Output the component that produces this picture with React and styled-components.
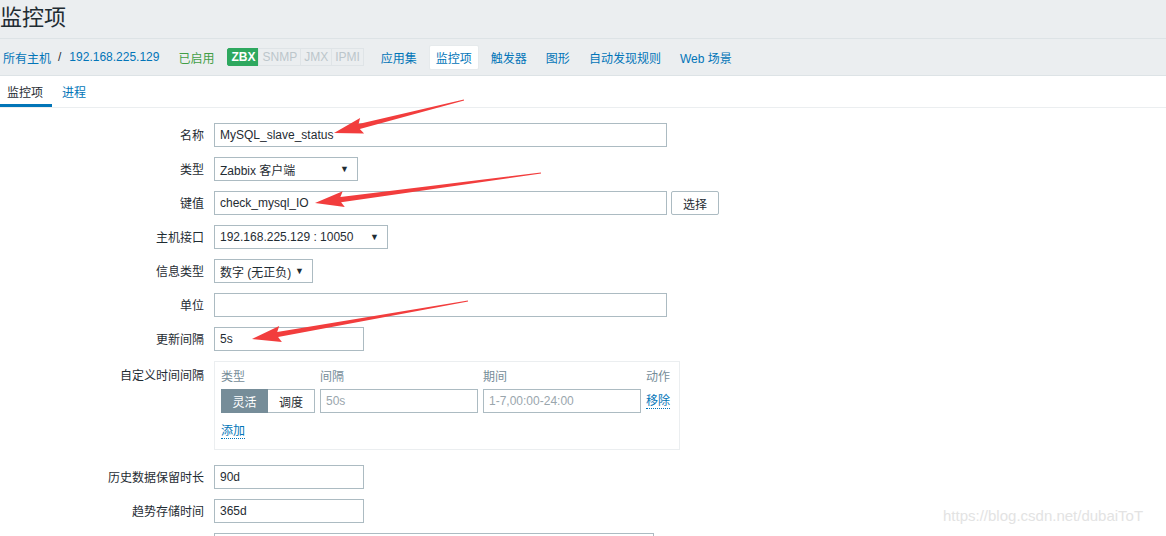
import React from 'react';
import styled, { createGlobalStyle } from 'styled-components';

const GlobalStyle = createGlobalStyle`
  html, body {
    margin: 0;
    padding: 0;
    background: #fff;
  }
  body {
    font-family: "Liberation Sans", "Noto Sans CJK SC", Arial, sans-serif;
    font-size: 12px;
    color: #1f2c33;
    overflow: hidden;
  }
`;

const Page = styled.div`
  position: relative;
  width: 1166px;
  height: 536px;
  overflow: hidden;
`;

const Header = styled.header`
  height: 38px;
  background: #ebeef0;
  border-bottom: 1px solid #dde3e6;
  display: flex;
  align-items: center;
`;

const Title = styled.h1`
  margin: 0;
  font-size: 22px;
  font-weight: normal;
  color: #1f2c33;
  line-height: 1;
  margin-top: -2px;
`;

const NavBar = styled.nav`
  height: 37px;
  background: #ebeef0;
  border-bottom: 1px solid #dde3e6;
  display: flex;
  align-items: center;
  padding-left: 3px;
  box-sizing: border-box;
`;

const Crumb = styled.span`
  color: ${p => (p.plain ? '#1f2c33' : '#0275b8')};
  margin-right: ${p => p.gap || 0}px;
`;

const Status = styled.span`
  color: #429e47;
  margin-right: 13px;
`;

const Badges = styled.div`
  display: flex;
  margin-right: 11px;
`;

const Badge = styled.span`
  height: 16px;
  line-height: 16px;
  padding: 0 3px;
  font-size: 12px;
  border: 1px solid ${p => (p.on ? '#2ea85f' : '#dfe4e7')};
  background: ${p => (p.on ? '#2ea85f' : '#ebeef0')};
  color: ${p => (p.on ? '#fff' : '#bcc6cb')};
  font-weight: ${p => (p.on ? 'bold' : 'normal')};
  margin-right: -1px;
  border-radius: ${p => (p.on ? '2px 0 0 2px' : '0')};
`;

const NavMenu = styled.div`
  display: flex;
  align-items: center;
  gap: 5px;
`;

const NavLink = styled.span`
  color: #0275b8;
  padding: 3px 6px;
  border-radius: 2px;
  background: ${p => (p.active ? '#fff' : 'transparent')};
  border: 1px solid ${p => (p.active ? '#e6eaec' : 'transparent')};
`;

const TabBar = styled.div`
  height: 31px;
  border-bottom: 1px solid #ebeef0;
  display: flex;
  gap: 3px;
`;

const Tab = styled.div`
  padding: 3px 9px 0 7px;
  display: flex;
  align-items: center;
  color: ${p => (p.active ? '#1f2c33' : '#0275b8')};
  border-bottom: 3px solid ${p => (p.active ? '#0275b8' : 'transparent')};
`;

const Form = styled.div`
  display: grid;
  grid-template-columns: 204px auto;
  column-gap: 10px;
  row-gap: 10px;
  padding-top: 15px;
  align-items: center;
  justify-items: start;
`;

const Label = styled.label`
  justify-self: end;
  align-self: ${p => (p.top ? 'start' : 'center')};
  padding-top: ${p => (p.top ? '5px' : '0')};
  margin-top: ${p => (p.top ? '0' : '-2px')};
  color: #1f2c33;
  white-space: nowrap;
`;

const Field = styled.div`
  display: flex;
  gap: 4px;
`;

const Input = styled.div`
  box-sizing: border-box;
  width: ${p => p.w}px;
  height: 24px;
  border: 1px solid #acbbc2;
  padding: 0 5px;
  display: flex;
  align-items: center;
  color: ${p => (p.muted ? '#9aa6ad' : '#1f2c33')};
  background: #fff;
`;

const Select = styled(Input)`
  justify-content: space-between;
  padding-right: 8px;
`;

const Caret = styled.span`
  font-size: 9px;
  color: #1f2c33;
`;

const Button = styled.div`
  box-sizing: border-box;
  height: 24px;
  width: 48px;
  border: 1px solid #acbbc2;
  border-radius: 2px;
  display: flex;
  align-items: center;
  justify-content: center;
  background: #fff;
`;

const IntervalBox = styled.div`
  box-sizing: border-box;
  width: 466px;
  height: 89px;
  border: 1px solid #ebeef0;
  padding: 5px 6px;
  margin-bottom: 5px;
`;

const IntervalGrid = styled.div`
  display: grid;
  grid-template-columns: 94px 158px 158px auto;
  column-gap: 5px;
  row-gap: 2px;
  align-items: center;
`;

const HeadCell = styled.div`
  color: #768d99;
  height: 20px;
  line-height: 20px;
`;

const Segment = styled.div`
  display: flex;
  height: 24px;
  box-sizing: border-box;
`;

const SegButton = styled.div`
  width: 48px;
  box-sizing: border-box;
  display: flex;
  align-items: center;
  justify-content: center;
  background: ${p => (p.on ? '#768d99' : '#fff')};
  color: ${p => (p.on ? '#fff' : '#1f2c33')};
  border: 1px solid ${p => (p.on ? '#768d99' : '#acbbc2')};
  ${p => !p.on && 'border-left: none;'}
`;

const DotLink = styled.span`
  color: #0275b8;
  border-bottom: 1px dotted #0275b8;
  line-height: 14px;
  display: inline-block;
`;

const AddRow = styled.div`
  margin-top: 11px;
`;

const Watermark = styled.div`
  position: absolute;
  left: 943px;
  top: 507px;
  font-size: 15px;
  color: #e3e3e3;
  font-family: "Liberation Sans", Arial, sans-serif;
`;

const Overlay = styled.svg`
  position: absolute;
  left: 0;
  top: 0;
  pointer-events: none;
`;

function arrowPoints(tx, ty, px, py) {
  const dx = px - tx;
  const dy = py - ty;
  const len = Math.hypot(dx, dy);
  const ux = dx / len;
  const uy = dy / len;
  const nx = -uy;
  const ny = ux;
  const head = 26;
  const bx = px - ux * head;
  const by = py - uy * head;
  const pts = [
    [tx + nx * 0.4, ty + ny * 0.4],
    [bx + nx * 2.6, by + ny * 2.6],
    [bx - ux * 3 + nx * 8, by - uy * 3 + ny * 8],
    [px, py],
    [bx - ux * 3 - nx * 8, by - uy * 3 - ny * 8],
    [bx - nx * 2.6, by - ny * 2.6],
    [tx - nx * 0.4, ty - ny * 0.4],
  ];
  return pts.map(p => p.map(v => v.toFixed(1)).join(',')).join(' ');
}

const arrows = [
  [464, 100, 334, 133],
  [541, 173, 315, 203],
  [468, 301, 252, 339],
];

export default function App() {
  return (
    <Page>
      <GlobalStyle />
      <Header>
        <Title>监控项</Title>
      </Header>
      <NavBar>
        <Crumb gap={7}>所有主机</Crumb>
        <Crumb plain gap={8}>/</Crumb>
        <Crumb gap={19}>192.168.225.129</Crumb>
        <Status>已启用</Status>
        <Badges>
          <Badge on>ZBX</Badge>
          <Badge>SNMP</Badge>
          <Badge>JMX</Badge>
          <Badge>IPMI</Badge>
        </Badges>
        <NavMenu>
          <NavLink>应用集</NavLink>
          <NavLink active>监控项</NavLink>
          <NavLink>触发器</NavLink>
          <NavLink>图形</NavLink>
          <NavLink>自动发现规则</NavLink>
          <NavLink>Web 场景</NavLink>
        </NavMenu>
      </NavBar>
      <TabBar>
        <Tab active>监控项</Tab>
        <Tab>进程</Tab>
      </TabBar>

      <Form>
        <Label>名称</Label>
        <Field><Input w={453}>MySQL_slave_status</Input></Field>

        <Label>类型</Label>
        <Field><Select w={144}>Zabbix 客户端<Caret>▼</Caret></Select></Field>

        <Label>键值</Label>
        <Field>
          <Input w={453}>check_mysql_IO</Input>
          <Button>选择</Button>
        </Field>

        <Label>主机接口</Label>
        <Field><Select w={174}>192.168.225.129 : 10050<Caret>▼</Caret></Select></Field>

        <Label>信息类型</Label>
        <Field><Select w={99}>数字 (无正负)<Caret>▼</Caret></Select></Field>

        <Label>单位</Label>
        <Field><Input w={453} /></Field>

        <Label>更新间隔</Label>
        <Field><Input w={150}>5s</Input></Field>

        <Label top>自定义时间间隔</Label>
        <IntervalBox>
          <IntervalGrid>
            <HeadCell>类型</HeadCell>
            <HeadCell>间隔</HeadCell>
            <HeadCell>期间</HeadCell>
            <HeadCell>动作</HeadCell>
            <Segment>
              <SegButton on>灵活</SegButton>
              <SegButton>调度</SegButton>
            </Segment>
            <Input w={158} muted>50s</Input>
            <Input w={158} muted>1-7,00:00-24:00</Input>
            <div><DotLink>移除</DotLink></div>
          </IntervalGrid>
          <AddRow><DotLink>添加</DotLink></AddRow>
        </IntervalBox>

        <Label>历史数据保留时长</Label>
        <Field><Input w={150}>90d</Input></Field>

        <Label>趋势存储时间</Label>
        <Field><Input w={150}>365d</Input></Field>

        <Label />
        <Field><Input w={440} /></Field>
      </Form>

      <Overlay width="1166" height="536" viewBox="0 0 1166 536">
        {arrows.map((a, i) => (
          <polygon key={i} points={arrowPoints(...a)} fill="#f23d3d" />
        ))}
      </Overlay>
      <Watermark>https://blog.csdn.net/dubaiToT</Watermark>
    </Page>
  );
}
